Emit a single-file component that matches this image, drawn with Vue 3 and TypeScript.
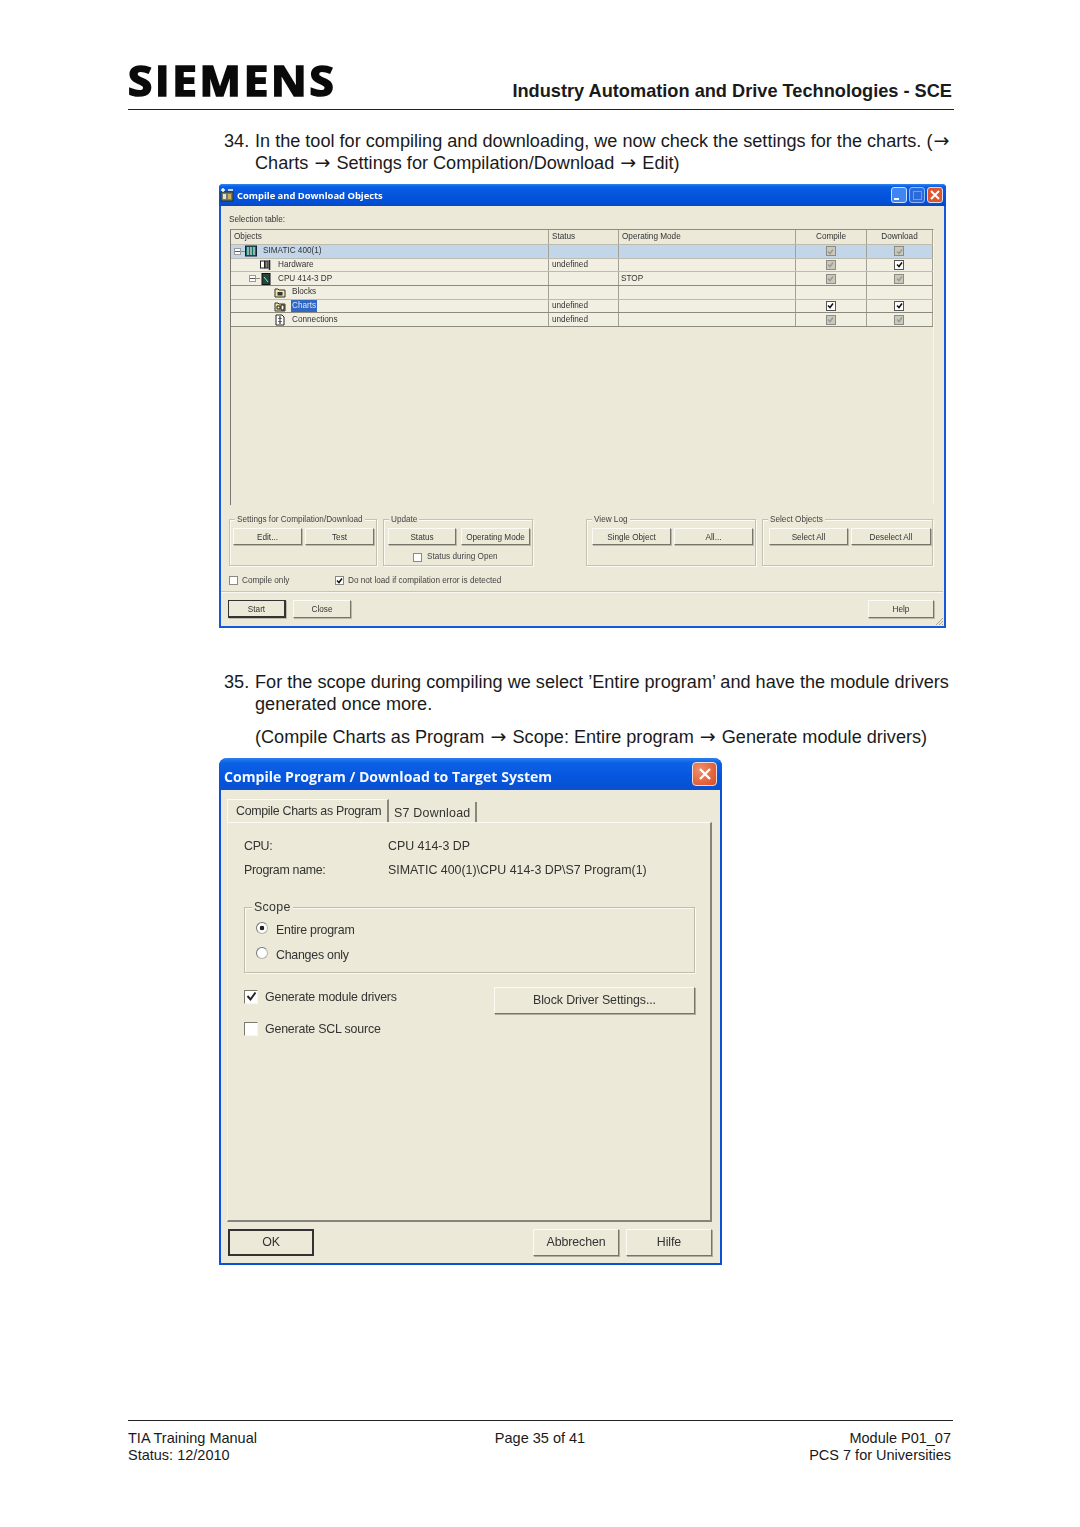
<template>
  <div class="page">
    <header class="doc-head">
      <div class="logo">SIEMENS</div>
      <div class="head-title">Industry Automation and Drive Technologies - SCE</div>
    </header>

    <section class="step step-34">
      <span class="num">34.</span>
      <p>In the tool for compiling and downloading, we now check the settings for the charts. (<span class="ar">→</span><br />Charts <span class="ar">→</span> Settings for Compilation/Download <span class="ar">→</span> Edit)</p>
    </section>

    <div class="win win-a">
      <div class="titlebar">
        <svg class="app-icon" width="14" height="14" viewBox="0 0 14 14">
          <rect x="1" y="4" width="12" height="9" fill="#6d7a70" stroke="#20302a" />
          <path d="M1 2h4M3 0v4M8 2h5" stroke="#fff" stroke-width="1.4" />
          <rect x="3" y="6" width="3" height="5" fill="#e8e4c8" />
          <rect x="8" y="6" width="3" height="5" fill="#c8b060" />
        </svg>
        <span class="title-a">Compile and Download Objects</span>
        <span class="ctl ctl-min"><i></i></span>
        <span class="ctl ctl-max"><i></i></span>
        <span class="ctl ctl-close">
          <svg width="10" height="10" viewBox="0 0 10 10"><path d="M1 1l8 8M9 1l-8 8" stroke="#fff" stroke-width="2" /></svg>
        </span>
      </div>
      <div class="body-a">
        <div class="sel-label">Selection table:</div>
        <div class="table">
          <div class="t-row t-head">
            <div class="cell c-obj">Objects</div>
            <div class="cell">Status</div>
            <div class="cell">Operating Mode</div>
            <div class="cell center">Compile</div>
            <div class="cell center">Download</div>
          </div>
          <div v-for="r in rows" :key="r.name" class="t-row" :class="{ sel: r.selected, strong: r.strong }">
            <div class="cell c-obj" :style="{ paddingLeft: r.indent + 'px' }">
              <span v-if="r.expander" class="expander"></span>
              <span v-if="r.expander" class="dash" :style="{ width: r.iconGap + 'px' }"></span>
              <svg class="tree-icon" width="12" height="12" viewBox="0 0 12 12">
                <template v-if="r.icon === 'rack'">
                  <rect x="0.5" y="1" width="11" height="10" fill="#1d6d66" stroke="#123" />
                  <path d="M3 2v8M6 2v8M9 2v8" stroke="#dfe8e4" stroke-width="1.2" />
                </template>
                <template v-else-if="r.icon === 'hw'">
                  <rect x="0.5" y="2" width="4" height="7" fill="#fff" stroke="#222" />
                  <rect x="5" y="2" width="3" height="7" fill="#888" stroke="#222" />
                  <path d="M9.5 1v10" stroke="#222" stroke-width="1.6" />
                </template>
                <template v-else-if="r.icon === 'cpu'">
                  <rect x="2" y="0.5" width="8" height="11" fill="#27443f" stroke="#111" />
                  <path d="M4 4l4 5" stroke="#7fc" />
                </template>
                <template v-else-if="r.icon === 'blocks'">
                  <path d="M1 3h3l1 1h6v7H1z" fill="#f2e6a0" stroke="#333" />
                  <rect x="3.5" y="6" width="5" height="3.5" fill="#334" />
                </template>
                <template v-else-if="r.icon === 'charts'">
                  <path d="M1 3h3l1 1h6v7H1z" fill="#f2e6a0" stroke="#333" />
                  <path d="M3 6h3v3H3zM7 5h3v5H7z" fill="#fff" stroke="#111" />
                </template>
                <template v-else>
                  <path d="M2 1h6l2 2v8H2z" fill="#fff" stroke="#222" />
                  <path d="M6 2v3M4.5 4L6 5.5 7.5 4M6 10V7M4.5 8L6 6.5 7.5 8" stroke="#111" fill="none" />
                </template>
              </svg>
              <span class="obj-name" :class="{ hl: r.name === 'Charts' }">{{ r.name }}</span>
            </div>
            <div class="cell">{{ r.status }}</div>
            <div class="cell stop">{{ r.mode }}</div>
            <div class="cell center">
              <span v-if="r.compile" class="tick" :class="r.compile">
                <svg width="7" height="7" viewBox="0 0 7 7"><path d="M1 3.5l2 2 3-4" fill="none" stroke-width="1.5" /></svg>
              </span>
            </div>
            <div class="cell center">
              <span v-if="r.download" class="tick" :class="r.download">
                <svg width="7" height="7" viewBox="0 0 7 7"><path d="M1 3.5l2 2 3-4" fill="none" stroke-width="1.5" /></svg>
              </span>
            </div>
          </div>
        </div>

        <div class="groups">
          <div class="group g1">
            <span class="legend">Settings for Compilation/Download</span>
            <div class="btns"><button class="btn b69">Edit...</button><button class="btn b69">Test</button></div>
          </div>
          <div class="group g2">
            <span class="legend">Update</span>
            <div class="btns"><button class="btn b68">Status</button><button class="btn b69">Operating Mode</button></div>
            <div class="open-row"><span class="box"></span>Status during Open</div>
          </div>
          <div class="group g3">
            <span class="legend">View Log</span>
            <div class="btns"><button class="btn b79">Single Object</button><button class="btn b79">All...</button></div>
          </div>
          <div class="group g4">
            <span class="legend">Select Objects</span>
            <div class="btns"><button class="btn b79">Select All</button><button class="btn b80">Deselect All</button></div>
          </div>
        </div>

        <div class="opt-row">
          <span class="opt o1"><span class="box"></span>Compile only</span>
          <span class="opt">
            <span class="box on">
              <svg width="7" height="7" viewBox="0 0 7 7"><path d="M1 3.5l2 2 3-4" fill="none" stroke="#111" stroke-width="1.5" /></svg>
            </span>Do not load if compilation error is detected
          </span>
        </div>
        <div class="sep"></div>
        <div class="foot-a">
          <button class="btn start">Start</button>
          <button class="btn close">Close</button>
          <button class="btn help">Help</button>
        </div>
      </div>
      <svg class="grip" width="10" height="10" viewBox="0 0 10 10">
        <path d="M9 2L2 9M9 5L5 9M9 8L8 9" stroke="#a9a796" fill="none" />
      </svg>
    </div>

    <section class="step step-35">
      <span class="num">35.</span>
      <div>
        <p>For the scope during compiling we select ’Entire program’ and have the module drivers<br />generated once more.</p>
        <p class="sub">(Compile Charts as Program <span class="ar">→</span> Scope: Entire program <span class="ar">→</span> Generate module drivers)</p>
      </div>
    </section>

    <div class="win win-b">
      <div class="titlebar tb-b">
        <span class="title-b">Compile Program / Download to Target System</span>
        <span class="ctl-b">
          <svg width="14" height="14" viewBox="0 0 14 14"><path d="M2 2l10 10M12 2L2 12" stroke="#fff" stroke-width="2.4" /></svg>
        </span>
      </div>
      <div class="body-b">
        <div class="tabs">
          <div class="tab active">Compile Charts as Program</div>
          <div class="tab second">S7 Download</div>
        </div>
        <div class="pane">
          <div class="info"><span class="lbl">CPU:</span><span>CPU 414-3 DP</span></div>
          <div class="info"><span class="lbl">Program name:</span><span>SIMATIC 400(1)\CPU 414-3 DP\S7 Program(1)</span></div>
          <div class="scope">
            <span class="scope-legend">Scope</span>
            <div class="radio-row"><span class="radio on"></span>Entire program</div>
            <div class="radio-row"><span class="radio"></span>Changes only</div>
          </div>
          <div class="gen-row">
            <span class="box-b">
              <svg width="11" height="11" viewBox="0 0 11 11"><path d="M1.5 5l3 3.5 5-7" fill="none" stroke="#222" stroke-width="2" /></svg>
            </span>
            <span class="gen-label">Generate module drivers</span>
            <button class="btn-b block">Block Driver Settings...</button>
          </div>
          <div class="gen-row scl">
            <span class="box-b"></span>
            <span class="gen-label">Generate SCL source</span>
          </div>
        </div>
        <div class="foot-b">
          <button class="btn-b ok">OK</button>
          <button class="btn-b">Abbrechen</button>
          <button class="btn-b">Hilfe</button>
        </div>
      </div>
    </div>

    <footer class="doc-foot">
      <div>TIA Training Manual<br />Status: 12/2010</div>
      <div class="foot-mid">Page 35 of 41</div>
      <div class="foot-right">Module P01_07<br />PCS 7 for Universities</div>
    </footer>
  </div>
</template>

<script setup lang="ts">
interface TreeRow {
  name: string
  icon: string
  indent: number
  iconGap: number
  expander: boolean
  status: string
  mode: string
  compile: string
  download: string
  selected?: boolean
  strong?: boolean
}

const rows: TreeRow[] = [
  { name: 'SIMATIC 400(1)', icon: 'rack', indent: 3, iconGap: 4, expander: true, status: '', mode: '', compile: 'dim', download: 'dim', selected: true },
  { name: 'Hardware', icon: 'hw', indent: 29, iconGap: 0, expander: false, status: 'undefined', mode: '', compile: 'dim', download: 'on' },
  { name: 'CPU 414-3 DP', icon: 'cpu', indent: 18, iconGap: 4, expander: true, status: '', mode: 'STOP', compile: 'dim', download: 'dim', strong: true },
  { name: 'Blocks', icon: 'blocks', indent: 43, iconGap: 0, expander: false, status: '', mode: '', compile: '', download: '' },
  { name: 'Charts', icon: 'charts', indent: 43, iconGap: 0, expander: false, status: 'undefined', mode: '', compile: 'on', download: 'on', strong: true },
  { name: 'Connections', icon: 'conn', indent: 43, iconGap: 0, expander: false, status: 'undefined', mode: '', compile: 'dim', download: 'dim', strong: true },
]
</script>

<style>
html,
body {
  margin: 0;
  background: #fff;
}
</style>

<style scoped>
.page {
  width: 1080px;
  height: 1527px;
  box-sizing: border-box;
  font-family: "Liberation Sans", Arial, sans-serif;
  color: #1a1a1a;
  overflow: hidden;
}

button {
  font-family: inherit;
  padding: 0;
  margin: 0;
}

.doc-head {
  margin-left: 128px;
  width: 826px;
  height: 110px;
  box-sizing: border-box;
  border-bottom: 1.5px solid #222;
  display: flex;
  justify-content: space-between;
  align-items: flex-end;
}

.logo {
  font-family: "Open Sans", sans-serif;
  font-weight: 700;
  font-size: 41px;
  line-height: 42px;
  letter-spacing: 2.6px;
  color: #0a0a0a;
  -webkit-text-stroke: 1.7px #0a0a0a;
  margin-bottom: 8px;
  transform: scaleX(1.07);
  transform-origin: left center;
}

.head-title {
  font-weight: 700;
  font-size: 18.2px;
  line-height: 22px;
  margin: 0 2px 7px 0;
}

.step {
  margin-left: 224px;
  width: 730px;
  display: flex;
  font-size: 18.13px;
  line-height: 22px;
  white-space: nowrap;
}

.step p {
  margin: 0;
}

.ar {
  display: inline-block;
  width: 18px;
  text-align: center;
  font-family: "DejaVu Sans", sans-serif;
  font-size: 19px;
  line-height: 0;
}

.num {
  width: 31px;
  flex: none;
}

.step-34 {
  margin-top: 20px;
}

.step-35 {
  margin-top: 43px;
}

.step .sub {
  margin-top: 11px;
}

.win {
  margin-left: 219px;
  box-sizing: border-box;
  background: #ece9d8;
  border: 2px solid #1758d6;
  border-top: 0;
  border-radius: 4px 4px 0 0;
  filter: blur(0.45px);
  position: relative;
}

.grip {
  position: absolute;
  right: 0;
  bottom: 0;
}

.win-a {
  width: 727px;
  height: 444px;
  margin-top: 10px;
}

.titlebar {
  height: 22px;
  display: flex;
  align-items: center;
  background: linear-gradient(#2f86f0 0, #0a5fe4 12%, #0453dc 55%, #0350d8 85%, #0a47b8 100%);
  border-radius: 4px 4px 0 0;
  padding: 0 1px;
  margin: 0 -2px;
}

.app-icon {
  flex: none;
}

.title-a {
  flex: 1;
  margin-left: 3px;
  color: #fff;
  font-family: "Open Sans", sans-serif;
  font-weight: 700;
  font-size: 9.4px;
}

.ctl {
  width: 16px;
  height: 16px;
  margin-left: 2px;
  box-sizing: border-box;
  border: 1px solid #cfe0fa;
  border-radius: 3px;
  display: flex;
  align-items: center;
  justify-content: center;
}

.ctl-min {
  background: #3f86f2;
}

.ctl-min i {
  width: 5px;
  height: 2px;
  background: #fff;
  margin: 7px 5px 0 0;
}

.ctl-max {
  background: #3a74dc;
  opacity: 0.7;
}

.ctl-max i {
  width: 7px;
  height: 7px;
  border: 1px solid #9fbdea;
}

.ctl-close {
  background: #e0552c;
  margin-right: 2px;
}

.body-a {
  height: 419px;
  padding: 0 10px 0 8px;
  font-size: 8.2px;
  color: #333;
}

.sel-label {
  height: 23px;
  box-sizing: border-box;
  padding-top: 8px;
  line-height: 12px;
}

.table {
  margin-left: 1px;
  height: 276px;
  width: 704px;
  box-sizing: border-box;
  border-left: 1px solid #777;
  border-top: 1px solid #8d8b80;
  border-right: 1px solid #f7f5ea;
}

.t-row {
  display: grid;
  grid-template-columns: 318px 70px 177px 71px 66px;
  height: 13.67px;
  box-sizing: border-box;
  background: #f1eee2;
  border-bottom: 1px solid #bdbbad;
}

.t-row.strong {
  border-bottom-color: #8d8b7e;
}

.t-head {
  height: 15px;
  background: #ece9d8;
}

.t-row.sel {
  background: #c3d5e8;
}

.cell {
  display: flex;
  align-items: center;
  padding-left: 3px;
  border-right: 1px solid #a3a194;
  white-space: nowrap;
  overflow: hidden;
  line-height: 12px;
}

.center {
  justify-content: center;
  padding-left: 0;
}

.stop {
  padding-left: 2px;
}

.expander {
  width: 7px;
  height: 7px;
  flex: none;
  box-sizing: border-box;
  border: 1px solid #999;
  background: linear-gradient(#555, #555) center / 5px 1px no-repeat, #fff;
}

.dash {
  height: 1px;
  flex: none;
  background: #8f8d80;
}

.tree-icon {
  flex: none;
}

.obj-name {
  margin-left: 6px;
}

.hl {
  background: #3168c4;
  color: #dbe6f8;
  padding: 0 1px;
  margin-left: 5px;
}

.tick {
  width: 10px;
  height: 10px;
  margin-right: 1px;
  box-sizing: border-box;
  display: flex;
  align-items: center;
  justify-content: center;
  border: 1px solid #555;
  stroke: #111;
}

.tick.on {
  background: #fff;
}

.tick.dim {
  background: #c9c8bc;
  border-color: #8c8c86;
  stroke: #9b9b94;
}

.groups {
  display: flex;
  margin: 14px 0 0 0;
  color: #444;
}

.group {
  height: 47px;
  box-sizing: border-box;
  border: 1px solid #c4c1b2;
  box-shadow: 1px 1px 0 #fbfaf3, inset 1px 1px 0 #fbfaf3;
  position: relative;
  padding: 8px 0 0 3px;
}

.g1 {
  width: 148px;
}

.g2 {
  width: 150px;
  margin-left: 6px;
  padding-left: 4px;
}

.g3 {
  width: 170px;
  margin-left: 53px;
  padding-left: 5px;
}

.g4 {
  width: 171px;
  margin-left: 6px;
  padding-left: 6px;
}

.legend {
  position: absolute;
  top: -6px;
  left: 5px;
  padding: 0 2px;
  background: #ece9d8;
  line-height: 11px;
  white-space: nowrap;
}

.btns {
  display: flex;
  gap: 3px;
}

.g2 .btns {
  gap: 5px;
}

.btn {
  height: 17px;
  padding-top: 1px;
  font-size: 8.2px;
  color: #333;
  background: #ece9d8;
  border: 1px solid;
  border-color: #fbfaf4 #77756a #77756a #fbfaf4;
  box-shadow: 1px 1px 0 #bcb9aa;
}

.b68 {
  width: 68px;
}

.b69 {
  width: 69px;
}

.b79 {
  width: 79px;
}

.b80 {
  width: 80px;
}

.open-row {
  display: flex;
  align-items: center;
  margin: 6px 0 0 25px;
  line-height: 12px;
}

.open-row .box {
  margin-right: 5px;
}

.box {
  width: 9px;
  height: 9px;
  box-sizing: border-box;
  background: #fff;
  border: 1px solid #8a8880;
  margin-right: 4px;
  flex: none;
  display: inline-flex;
  align-items: center;
  justify-content: center;
}

.opt-row {
  display: flex;
  height: 14px;
  margin-top: 7px;
  color: #444;
  align-items: center;
}

.opt {
  display: flex;
  align-items: center;
}

.o1 {
  width: 106px;
}

.sep {
  margin: 4px -9px 0 -8px;
  height: 1px;
  background: #c8c5b5;
  box-shadow: 0 1px 0 #faf9f1;
}

.foot-a {
  display: flex;
  margin: 8px 0 0 -1px;
}

.start {
  width: 58px;
  height: 18px;
  border: 1px solid #333;
  border-right-width: 2px;
  border-bottom-width: 2px;
}

.close {
  width: 58px;
  height: 18px;
  margin-left: 7px;
}

.help {
  width: 66px;
  height: 18px;
  margin-left: auto;
}

.win-b {
  width: 503px;
  height: 507px;
  margin-top: 10px;
  border-width: 0 2px 2px;
  border-color: #0d50d8;
  border-radius: 8px 8px 0 0;
  filter: blur(0.5px);
}

.tb-b {
  height: 32px;
  border-radius: 8px 8px 0 0;
  background: linear-gradient(#2a80ee 0, #0b62e6 15%, #0555de 60%, #0b50d0 100%);
  padding: 0 5px 0 5px;
}

.title-b {
  flex: 1;
  padding-top: 5px;
  color: #f4f8ff;
  font-family: "Open Sans", sans-serif;
  font-weight: 700;
  font-size: 14.1px;
  white-space: nowrap;
}

.ctl-b {
  width: 25px;
  height: 24px;
  box-sizing: border-box;
  border: 1px solid #f4dcd4;
  border-radius: 4px;
  background: radial-gradient(circle at 30% 30%, #ef8f6c, #d94b22);
  display: flex;
  align-items: center;
  justify-content: center;
}

.body-b {
  padding: 9px 8px 0 6px;
  height: 473px;
  box-sizing: border-box;
  font-family: "Liberation Sans", sans-serif;
  font-size: 12.4px;
  letter-spacing: -0.2px;
  color: #333;
}

.tabs {
  display: flex;
  align-items: flex-end;
  height: 23px;
}

.tab {
  box-sizing: border-box;
  height: 20px;
  padding: 0 5px;
  line-height: 22px;
  white-space: nowrap;
  border-right: 2px solid #8a887a;
}

.tab.second {
  letter-spacing: 0.25px;
}

.tab.active {
  height: 23px;
  line-height: 22px;
  width: 162px;
  padding-left: 8px;
  letter-spacing: -0.3px;
  border-top: 1px solid #fbfaf3;
  border-left: 1px solid #fbfaf3;
}

.pane {
  box-sizing: border-box;
  height: 400px;
  width: 485px;
  border-top: 1px solid #fbfaf3;
  border-left: 1px solid #f5f3e8;
  border-right: 2px solid #86847a;
  border-bottom: 2px solid #86847a;
  padding: 11px 0 0 16px;
}

.info {
  display: grid;
  grid-template-columns: 144px 1fr;
  height: 24px;
  line-height: 24px;
  white-space: nowrap;
  letter-spacing: 0;
}

.lbl {
  letter-spacing: -0.3px;
}

.scope {
  position: relative;
  width: 451px;
  height: 66px;
  margin-top: 25px;
  box-sizing: border-box;
  border: 1px solid #c0bdae;
  box-shadow: 1px 1px 0 #fbfaf3, inset 1px 1px 0 #fbfaf3;
  padding-top: 9px;
}

.scope-legend {
  position: absolute;
  top: -8px;
  left: 7px;
  padding: 0 2px;
  background: #ece9d8;
  line-height: 15px;
  letter-spacing: 0.3px;
}

.radio-row {
  display: flex;
  align-items: center;
  height: 25px;
  padding-left: 11px;
  letter-spacing: -0.25px;
}

.radio {
  width: 12px;
  height: 12px;
  box-sizing: border-box;
  border-radius: 50%;
  background: #fff;
  border: 1px solid #b5b3a6;
  border-top-color: #777;
  border-left-color: #777;
  margin-right: 8px;
  margin-top: -3px;
  flex: none;
}

.radio.on {
  background: radial-gradient(circle, #222 0 2px, #fff 2.6px);
}

.gen-row {
  display: flex;
  align-items: center;
  height: 27px;
  margin-top: 14px;
  width: 451px;
}

.scl {
  margin-top: 5px;
}

.box-b {
  width: 14px;
  height: 14px;
  box-sizing: border-box;
  border: 1px solid #f8f7ef;
  border-top-color: #7c7a70;
  border-left-color: #7c7a70;
  background: #fff;
  margin-right: 7px;
  margin-top: -8px;
  flex: none;
  display: flex;
  align-items: center;
  justify-content: center;
}

.gen-label {
  flex: 1;
  margin-top: -8px;
  white-space: nowrap;
}

.btn-b {
  width: 86px;
  height: 27px;
  padding-bottom: 2px;
  font-size: 12.4px;
  letter-spacing: -0.1px;
  color: #333;
  background: #ece9d8;
  border: 1px solid;
  border-color: #fbfaf4 #77756a #77756a #fbfaf4;
  box-shadow: 1px 1px 0 #b0ad9e;
}

.btn-b.block {
  width: 201px;
}

.foot-b {
  display: flex;
  gap: 7px;
  margin-top: 7px;
  padding-left: 1px;
}

.btn-b.ok {
  margin-right: auto;
  border: 2px solid #333;
  box-shadow: none;
}

.doc-foot {
  position: absolute;
  top: 1420px;
  left: 128px;
  width: 825px;
  box-sizing: border-box;
  border-top: 1.5px solid #222;
  padding: 9px 2px 0 0;
  display: grid;
  grid-template-columns: 1fr 1fr 1fr;
  font-size: 14.5px;
  line-height: 17px;
}

.foot-mid {
  text-align: center;
  margin-left: 1px;
}

.foot-right {
  text-align: right;
}
</style>
